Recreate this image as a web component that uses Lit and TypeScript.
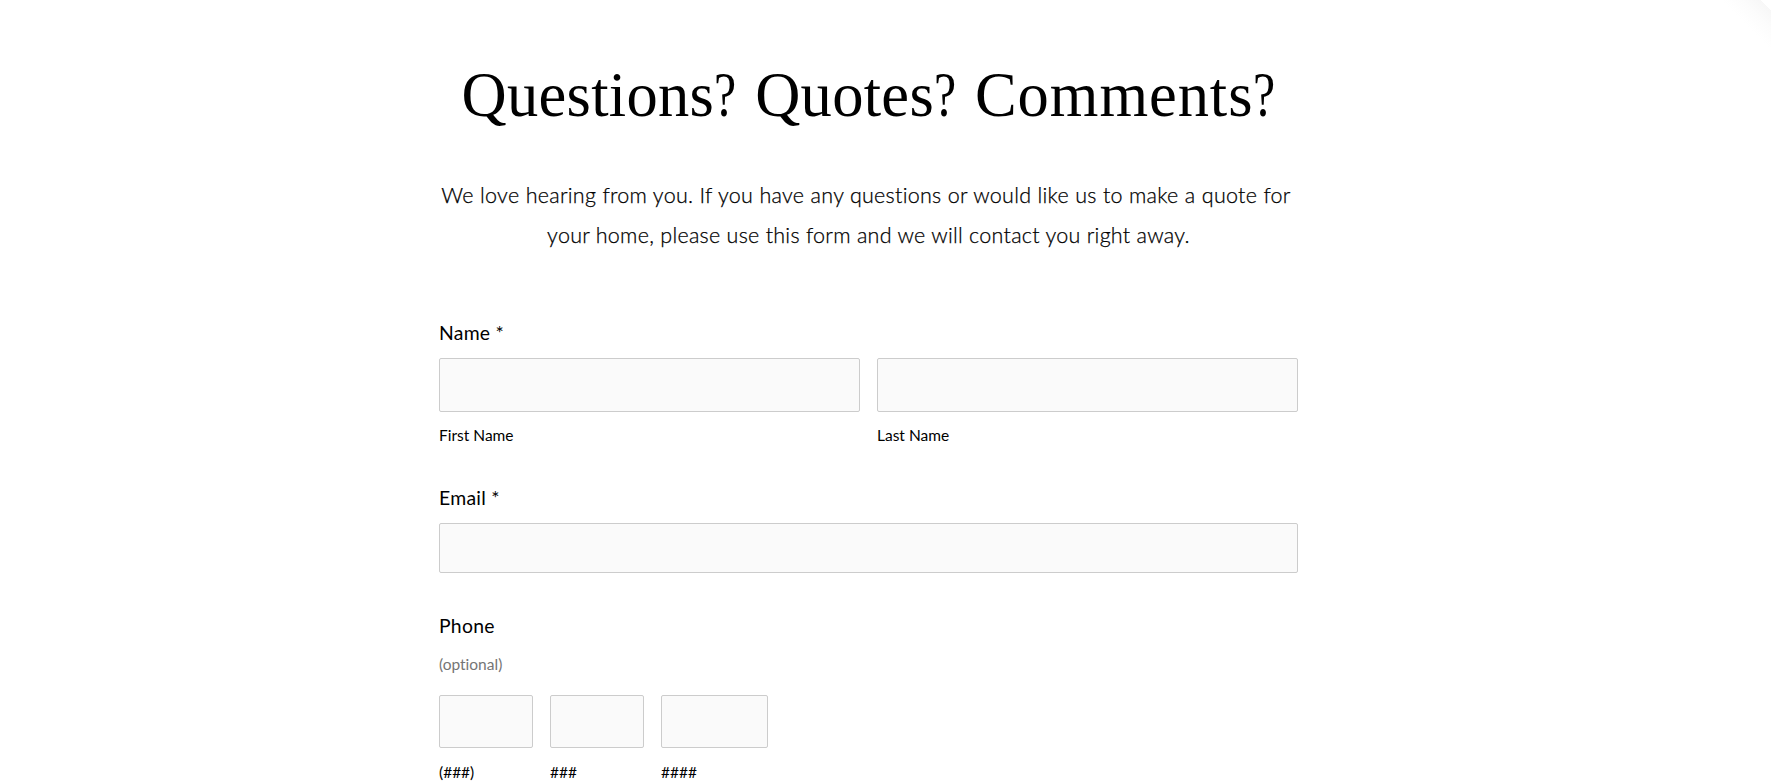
import { LitElement, html, css } from 'lit';
import { customElement, property } from 'lit/decorators.js';

@customElement('form-field')
export class FormField extends LitElement {
  @property() caption = '';

  static override styles = css`
    :host {
      display: block;
    }

    label {
      display: block;
    }

    input {
      display: block;
      box-sizing: border-box;
      width: 100%;
      height: var(--field-height, 54px);
      margin: 0;
      padding: 12px;
      border: 1px solid #ccc;
      border-radius: 2px;
      outline: none;
      background: #fafafa;
      font: inherit;
    }

    .caption {
      display: block;
      margin-top: var(--caption-gap, 11px);
      font-size: 15.5px;
      line-height: 24px;
    }
  `;

  protected override render() {
    return html`
      <label>
        <input type="text" aria-label=${this.caption || 'Email'} />
        ${this.caption ? html`<span class="caption">${this.caption}</span>` : ''}
      </label>
    `;
  }
}

@customElement('app-root')
export class AppRoot extends LitElement {
  static override styles = css`
    :host {
      display: block;
      position: relative;
      height: 782px;
      overflow: hidden;
      background: #fff;
      color: #000;
      font-family: Lato, 'Liberation Sans', sans-serif;
      font-variant-ligatures: none;
    }

    main {
      box-sizing: border-box;
      width: 859px;
      margin-left: 439px;
      padding-top: 57px;
    }

    h1 {
      margin: 0;
      font-family: 'Liberation Serif', serif;
      font-size: 62.5px;
      font-weight: 400;
      line-height: 76px;
      letter-spacing: 0.3px;
      word-spacing: 3px;
      text-align: center;
      white-space: nowrap;
    }

    .wide {
      letter-spacing: 0.95px;
    }

    /* Narrow question mark, closer to a Didone cut */
    .mark {
      display: inline-block;
      width: 22px;
      transform: scaleX(0.8);
      transform-origin: left;
    }

    .intro {
      margin: 42px 0 0;
      font-size: 21.5px;
      font-weight: 300;
      line-height: 40px;
      letter-spacing: 0.27px;
      text-align: center;
      white-space: nowrap;
      -webkit-text-stroke: 0.25px #000;
    }

    .line {
      display: block;
    }

    .line:first-child {
      padding-right: 5px;
      word-spacing: 0.15px;
    }

    fieldset {
      min-width: 0;
      margin: 0;
      padding: 0;
      border: 0;
    }

    .title {
      font-size: 19.4px;
      line-height: 30px;
      letter-spacing: 0.25px;
    }

    .name {
      margin-top: 63px;
    }

    .email {
      margin-top: 36px;
      --field-height: 50px;
    }

    .phone {
      margin-top: 38px;
      --field-height: 53px;
      --caption-gap: 12px;
    }

    .row {
      display: grid;
      gap: 17px;
      margin-top: 10px;
    }

    .name .row {
      grid-template-columns: 1fr 1fr;
    }

    .phone .row {
      grid-template-columns: 94px 94px 107px;
      margin-top: 19px;
    }

    .optional {
      margin-top: 11px;
      color: #757575;
      font-size: 15.5px;
      line-height: 24px;
    }

    .corner {
      position: absolute;
      top: 0;
      right: 0;
      width: 50px;
      height: 50px;
      background: linear-gradient(45deg, #fff 50%, #fcfcfc 70%, #f7f7f7 90%, #fff 90%);
    }
  `;

  protected override render() {
    const mark = html`<span class="mark">?</span>`;
    return html`
      <main>
        <h1>Questions${mark} Quotes${mark} <span class="wide">Comments${mark}</span></h1>
        <p class="intro">
          <span class="line">We love hearing from you. If you have any questions or would like us to make a quote for</span>
          <span class="line">your home, please use this form and we will contact you right away.</span>
        </p>
        <form>
          <fieldset class="name">
            <div class="title">Name *</div>
            <div class="row">
              <form-field caption="First Name"></form-field>
              <form-field caption="Last Name"></form-field>
            </div>
          </fieldset>
          <fieldset class="email">
            <div class="title">Email *</div>
            <div class="row">
              <form-field></form-field>
            </div>
          </fieldset>
          <fieldset class="phone">
            <div class="title">Phone</div>
            <div class="optional">(optional)</div>
            <div class="row">
              <form-field caption="(###)"></form-field>
              <form-field caption="###"></form-field>
              <form-field caption="####"></form-field>
            </div>
          </fieldset>
        </form>
      </main>
      <div class="corner"></div>
    `;
  }
}

declare global {
  interface HTMLElementTagNameMap {
    'form-field': FormField;
    'app-root': AppRoot;
  }
}
